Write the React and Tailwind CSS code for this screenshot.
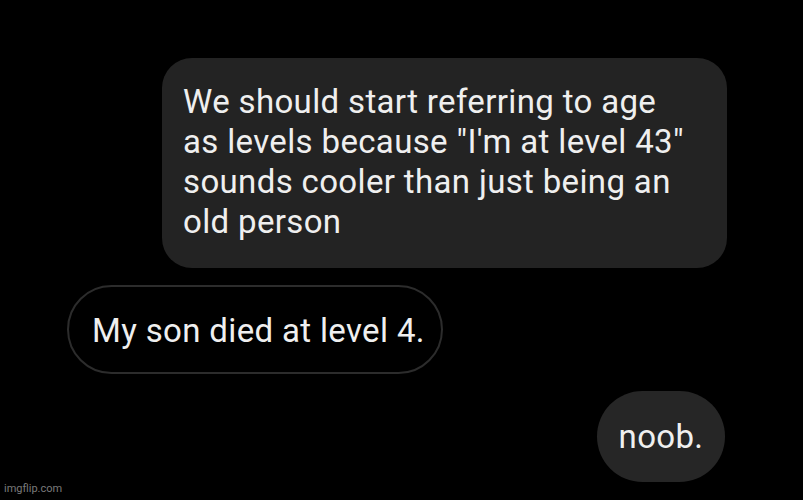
export default function App() {
  return (
    <div
      className="relative w-[803px] h-[500px] bg-black overflow-hidden"
      style={{ fontFamily: "Roboto, 'Liberation Sans', sans-serif" }}
    >
      <div className="flex flex-col gap-[17px] pt-[58px]">
        <div className="flex justify-end pr-[76px]">
          <div className="w-[565px] h-[210px] rounded-[30px] bg-[#232323] pl-[21px] pt-[24px] text-[33px] leading-[40px] tracking-[0.35px] text-[#efefef]">
            We should start referring to age
            <br />
            as levels because "I'm at level 43"
            <br />
            sounds cooler than just being an
            <br />
            old person
          </div>
        </div>

        <div className="flex pl-[67px]">
          <div className="h-[89px] w-[376px] rounded-full border-2 border-[#2c2c2c] pl-[23px] pt-[2px] flex items-center text-[33px] tracking-[0.35px] text-[#efefef]">
            My son died at level 4.
          </div>
        </div>

        <div className="flex justify-end pr-[78px]">
          <div className="h-[91px] w-[128px] rounded-full bg-[#262626] flex items-center justify-center text-[33px] tracking-[0.35px] text-[#efefef]">
            noob.
          </div>
        </div>
      </div>

      <div className="absolute left-[4px] bottom-[3px] text-[11px] text-[#7a7a7a]">
        imgflip.com
      </div>
    </div>
  );
}
